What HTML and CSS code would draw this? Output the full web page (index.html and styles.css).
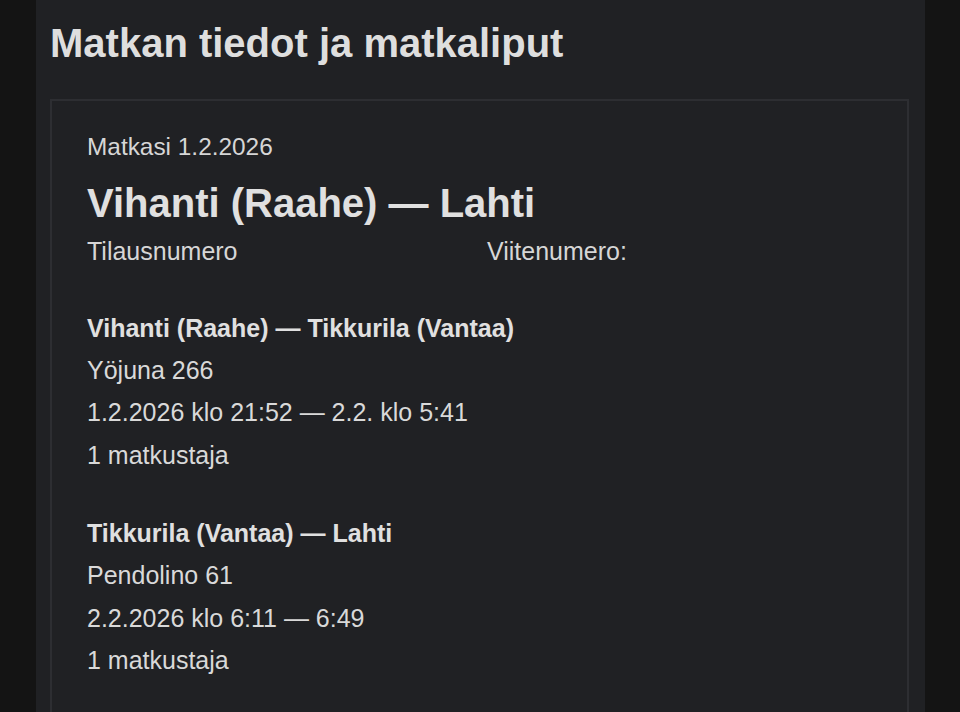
FILE: index.html
```html
<!DOCTYPE html>
<html lang="fi">
<head>
<meta charset="utf-8">
<title>Matkan tiedot ja matkaliput</title>
<link rel="stylesheet" href="styles.css">
</head>
<body>
<main class="panel">
  <h1 class="page-title">Matkan tiedot ja matkaliput</h1>
  <section class="card">
    <p class="trip-date">Matkasi 1.2.2026</p>
    <h2 class="trip-route">Vihanti (Raahe) — Lahti</h2>
    <div class="refs">
      <span class="ref ref-order">Tilausnumero<span class="redacted"></span></span>
      <span class="ref">Viitenumero:<span class="redacted"></span></span>
    </div>
    <div class="segment">
      <h3 class="segment-title">Vihanti (Raahe) — Tikkurila (Vantaa)</h3>
      <p class="line">Yöjuna 266</p>
      <p class="line">1.2.2026 klo 21:52 — 2.2. klo 5:41</p>
      <p class="line">1 matkustaja</p>
    </div>
    <div class="segment">
      <h3 class="segment-title">Tikkurila (Vantaa) — Lahti</h3>
      <p class="line">Pendolino 61</p>
      <p class="line">2.2.2026 klo 6:11 — 6:49</p>
      <p class="line">1 matkustaja</p>
    </div>
  </section>
</main>
</body>
</html>
```

FILE: styles.css
```css
html, body {
  margin: 0;
  padding: 0;
  height: 100%;
}
body {
  background: #141414;
  font-family: "Liberation Sans", Arial, sans-serif;
  color: #d9d9d9;
  overflow: hidden;
}
.panel {
  display: flex;
  flex-direction: column;
  margin: 0 35px 0 36px;
  height: 100%;
  background: #202124;
  padding: 19px 16px 0 14px;
  box-sizing: border-box;
  overflow: hidden;
}
.page-title {
  margin: 0 0 32px;
  font-size: 40px;
  line-height: 48px;
  font-weight: bold;
  color: #dedede;
}
.card {
  flex: 1;
  border: 2px solid #2d2e32;
  border-bottom: none;
  padding: 30px 35px 0;
}
.trip-date {
  margin: 0;
  font-size: 24.4px;
  line-height: 32px;
  color: #d6d6d6;
}
.trip-route {
  margin: 16px 0 0;
  font-size: 40px;
  line-height: 48px;
  font-weight: bold;
  color: #e0e0e0;
}
.refs {
  display: flex;
  margin-top: 3px;
  font-size: 25px;
  line-height: 42px;
  color: #d6d6d6;
}
.ref-order {
  flex: 0 0 400px;
}
.redacted {
  display: inline-block;
  width: 180px;
}
.segment {
  margin-top: 35px;
}
.segment + .segment {
  margin-top: 36px;
}
.segment-title {
  margin: 0;
  font-size: 25px;
  line-height: 42px;
  font-weight: bold;
  color: #e0e0e0;
}
.line {
  margin: 0;
  font-size: 25px;
  line-height: 42.4px;
  color: #d9d9d9;
}
```
